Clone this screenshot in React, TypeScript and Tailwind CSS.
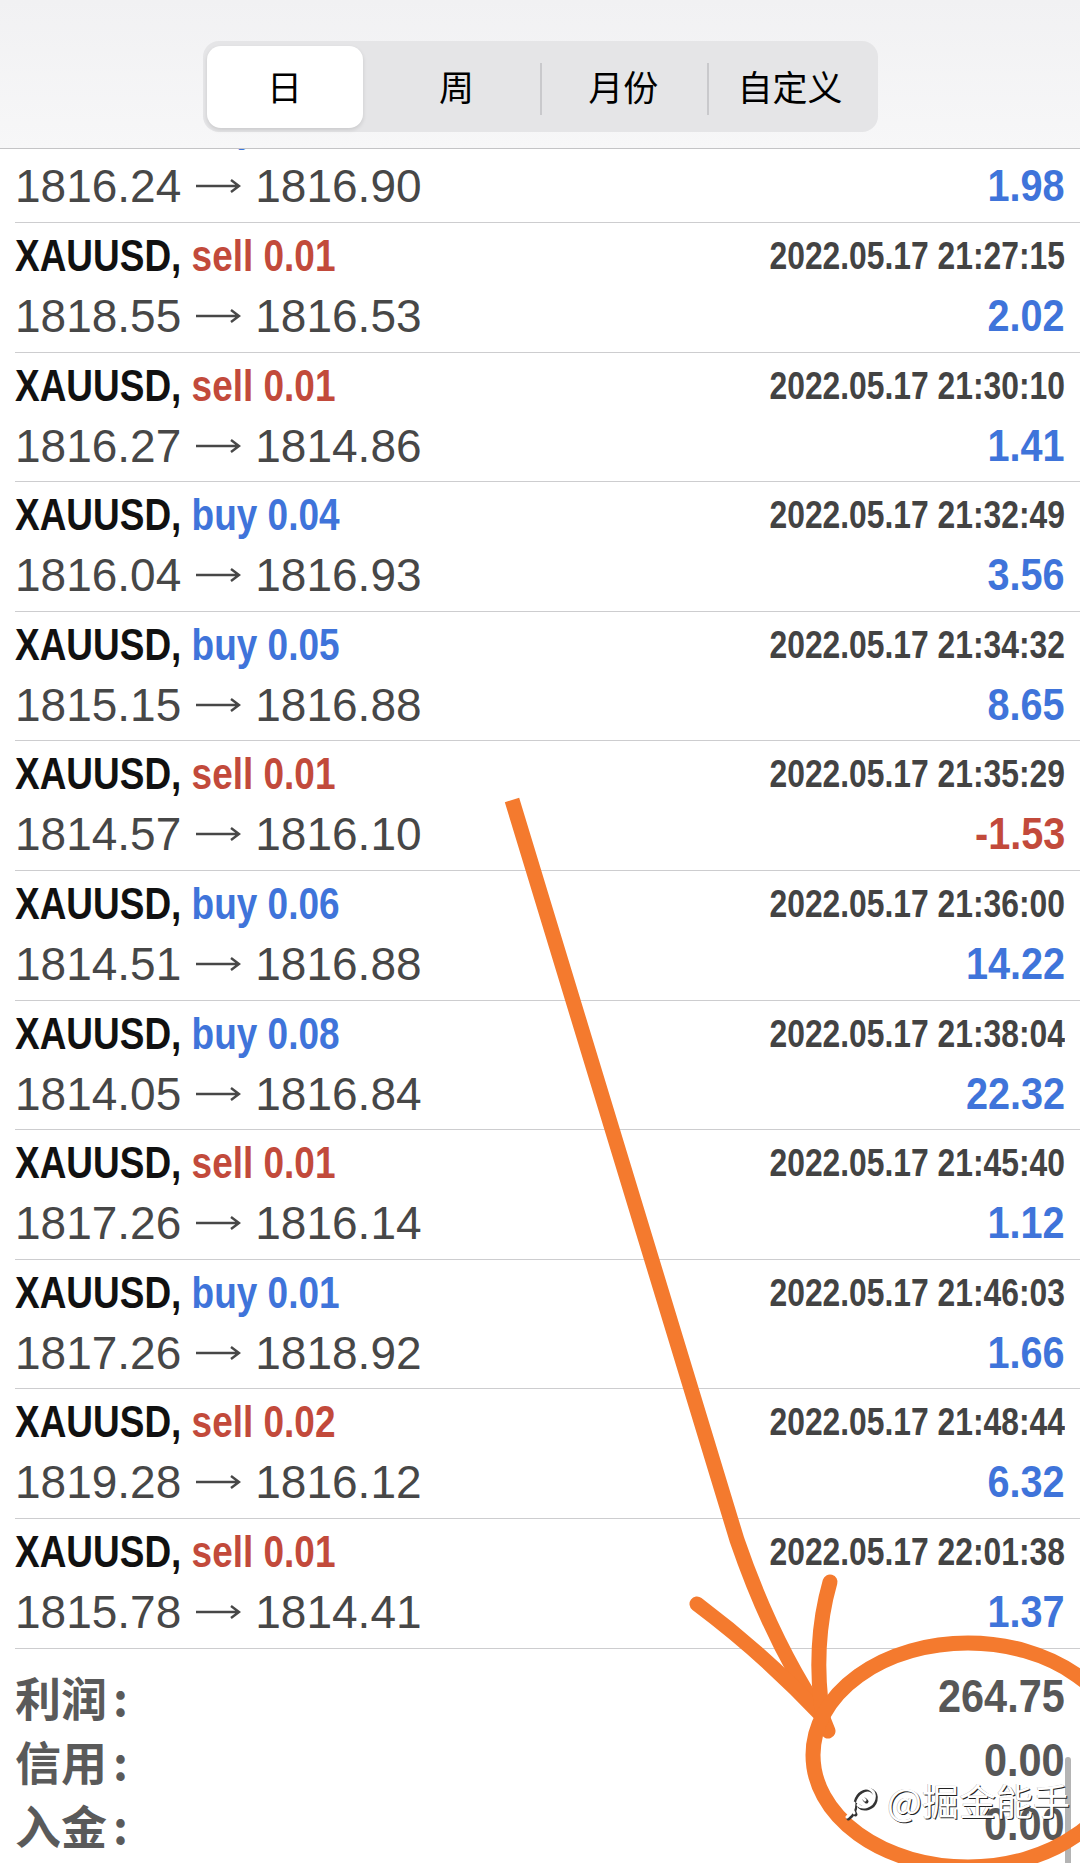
import React from "react";

// trade history rows (the first one is half hidden under the header)
const trades = [
  { side: "buy", lot: "0.01", time: "2022.05.17 21:25:02", open: "1816.24", close: "1816.90", profit: "1.98" },
  { side: "sell", lot: "0.01", time: "2022.05.17 21:27:15", open: "1818.55", close: "1816.53", profit: "2.02" },
  { side: "sell", lot: "0.01", time: "2022.05.17 21:30:10", open: "1816.27", close: "1814.86", profit: "1.41" },
  { side: "buy", lot: "0.04", time: "2022.05.17 21:32:49", open: "1816.04", close: "1816.93", profit: "3.56" },
  { side: "buy", lot: "0.05", time: "2022.05.17 21:34:32", open: "1815.15", close: "1816.88", profit: "8.65" },
  { side: "sell", lot: "0.01", time: "2022.05.17 21:35:29", open: "1814.57", close: "1816.10", profit: "-1.53" },
  { side: "buy", lot: "0.06", time: "2022.05.17 21:36:00", open: "1814.51", close: "1816.88", profit: "14.22" },
  { side: "buy", lot: "0.08", time: "2022.05.17 21:38:04", open: "1814.05", close: "1816.84", profit: "22.32" },
  { side: "sell", lot: "0.01", time: "2022.05.17 21:45:40", open: "1817.26", close: "1816.14", profit: "1.12" },
  { side: "buy", lot: "0.01", time: "2022.05.17 21:46:03", open: "1817.26", close: "1818.92", profit: "1.66" },
  { side: "sell", lot: "0.02", time: "2022.05.17 21:48:44", open: "1819.28", close: "1816.12", profit: "6.32" },
  { side: "sell", lot: "0.01", time: "2022.05.17 22:01:38", open: "1815.78", close: "1814.41", profit: "1.37" },
];

const summary = [
  { label: "利润", value: "264.75" },
  { label: "信用", value: "0.00" },
  { label: "入金", value: "0.00" },
  { label: "取金", value: "0.00" },
];

const tabs = ["日", "周", "月份", "自定义"];

type Trade = (typeof trades)[number];

const PriceArrow = () => (
  <svg width="46" height="20" viewBox="0 0 46 20" className="shrink-0">
    <path d="M1 10 H44 M36 4 L44 10 L36 16" fill="none" stroke="#474747" strokeWidth="2.4" strokeLinejoin="miter" />
  </svg>
);

const TradeRow = ({ t }: { t: Trade }) => {
  const sideColor = t.side === "sell" ? "text-[#c24a3b]" : "text-[#3f74da]";
  const profitColor = t.profit.startsWith("-") ? "text-[#c24a3b]" : "text-[#3f74da]";
  return (
    <div className="h-[129.6px] shrink-0 ml-[15px] pr-[15px] pt-[3px] border-b border-[#cdcdcf] flex flex-col">
      <div className="h-[60px] flex items-center justify-between">
        <span className="origin-left scale-x-[0.84] whitespace-nowrap font-['Liberation_Sans',sans-serif] font-bold text-[44px] leading-none text-[#111]">
          XAUUSD, <span className={sideColor}>{t.side} {t.lot}</span>
        </span>
        <span className="origin-right scale-x-[0.837] whitespace-nowrap font-['Liberation_Sans',sans-serif] font-bold text-[38px] leading-none text-[#434343]">
          {t.time}
        </span>
      </div>
      <div className="h-[60px] flex items-center justify-between">
        <div className="flex items-center gap-[14px] font-['Liberation_Sans',sans-serif] text-[46px] leading-none text-[#474747]">
          <span>{t.open}</span>
          <PriceArrow />
          <span>{t.close}</span>
        </div>
        <span
          className={`origin-right scale-x-[0.9] font-['Liberation_Sans',sans-serif] font-bold text-[44px] leading-none ${profitColor}`}
        >
          {t.profit}
        </span>
      </div>
    </div>
  );
};

export default function App() {
  return (
    <div className="relative w-[1080px] h-[1863px] overflow-hidden bg-white">
      {/* period switcher */}
      <div className="h-[149px] bg-gradient-to-b from-[#f1f1f3] to-[#f7f7f8] border-b border-[#c4c4c6] flex justify-center pt-[41px]">
        <div className="w-[675px] h-[91px] rounded-[16px] bg-[#e5e5e7] p-[4px] flex">
          {tabs.map((tab, i) => (
            <div key={tab} className="relative flex-1 flex items-center">
              {i === 0 ? (
                <div className="w-[156px] h-[82px] rounded-[14px] bg-white shadow-[0_2px_4px_rgba(0,0,0,0.12)] flex items-center justify-center">
                  <span className="font-['Noto_Sans_CJK_SC',sans-serif] text-[35px] text-black">{tab}</span>
                </div>
              ) : (
                <div className="w-full flex items-center justify-center">
                  <span className="font-['Noto_Sans_CJK_SC',sans-serif] text-[35px] text-black">{tab}</span>
                </div>
              )}
              {i > 1 && <div className="absolute left-0 top-[18px] w-[2px] h-[52px] bg-[#c9c9cc]" />}
            </div>
          ))}
        </div>
      </div>

      {/* first row, partly scrolled under the header */}
      <div className="h-[74px] overflow-hidden flex flex-col justify-end">
        <TradeRow t={trades[0]} />
      </div>
      {trades.slice(1).map((t) => (
        <TradeRow key={t.time} t={t} />
      ))}

      {/* totals */}
      <div className="px-[15px] pt-[15px]">
        {summary.map((s) => (
          <div key={s.label} className="h-[64px] flex items-center justify-between">
            <span className="font-['Noto_Sans_CJK_SC',sans-serif] font-bold text-[46px] leading-none text-[#5a5a5a]">
              {s.label}
              <span className="ml-[6px]">:</span>
            </span>
            <span className="origin-right scale-x-[0.9] font-['Liberation_Sans',sans-serif] font-bold text-[46px] leading-none text-[#575757]">
              {s.value}
            </span>
          </div>
        ))}
      </div>

      {/* scroll indicator */}
      <div className="absolute left-[1065px] top-[1757px] w-[6px] h-[120px] rounded-full bg-[#b4b4b4]" />

      {/* hand drawn orange arrow + circle */}
      <svg
        className="absolute inset-0 pointer-events-none"
        width="1080"
        height="1863"
        viewBox="0 0 1080 1863"
      >
        <g fill="none" stroke="#f47a2e" strokeWidth="15" strokeLinejoin="round">
          <path d="M512 800 L737 1540 Q772 1642 822 1716" strokeLinecap="butt" />
          <path d="M697 1604 Q765 1655 822 1716 L828 1731" strokeLinecap="round" />
          <path d="M830 1582 Q812 1645 823 1718" strokeLinecap="round" />
          <ellipse cx="968" cy="1755" rx="155" ry="112" />
        </g>
      </svg>

      {/* watermark */}
      <div className="absolute left-[843px] top-[1779px] flex items-center gap-[6px]">
        <svg width="38" height="42" viewBox="0 0 38 42">
          <g transform="translate(1.5 1.5)" fill="none" stroke="#333" strokeWidth="4" strokeLinecap="round">
            <path d="M11 34 C7 27 9 16 17 11 C25 6 33 12 31 20 C29 28 19 30 15 26" />
            <path d="M4 38 C8 35 11 31 11 24" />
            <path d="M20 19 L22 21" />
          </g>
          <g fill="none" stroke="#fff" strokeWidth="3" strokeLinecap="round">
            <path d="M11 34 C7 27 9 16 17 11 C25 6 33 12 31 20 C29 28 19 30 15 26" />
            <path d="M4 38 C8 35 11 31 11 24" />
            <path d="M20 19 L22 21" />
          </g>
        </svg>
        <span className="font-['Noto_Sans_CJK_SC',sans-serif] text-[37px] leading-none text-white [text-shadow:1px_1px_0_#222,-0.5px_-0.5px_0_rgba(0,0,0,0.35)]">
          @掘金能手
        </span>
      </div>
    </div>
  );
}
